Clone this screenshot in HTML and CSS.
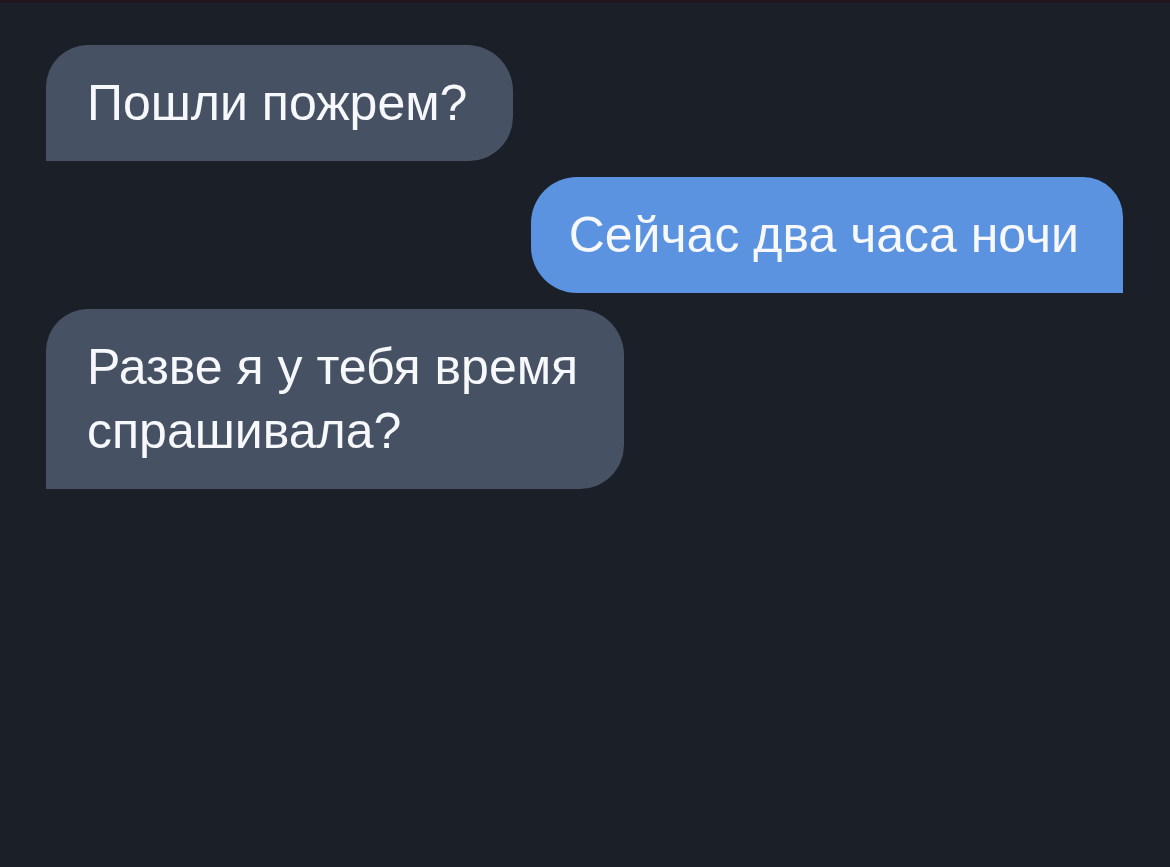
FILE: index.html
```html
<!DOCTYPE html>
<html lang="ru">
<head>
	<meta charset="utf-8" />
	<title>Чат</title>
	<link rel="stylesheet" href="styles.css">
</head>
<body>
<div class="polosa"></div>
<div class="chat">
	<div class="msg in">Пошли пожрем?</div>
	<div class="msg out">Сейчас два часа ночи</div>
	<div class="msg in">Разве я у тебя время<br />спрашивала?</div>
</div>
</body>
</html>
```

FILE: styles.css
```css
html, body {
	margin: 0;
	padding: 0;
}
body {
	background-color: #1a1f28;
	font-family: "Liberation Sans", Arial, sans-serif;
	height: 867px;
	overflow: hidden;
}
.polosa {
	height: 3px;
	background-color: #20151f;
}
.chat {
	display: flex;
	flex-direction: column;
	align-items: flex-start;
	gap: 16px;
	padding: 42px 47px 0 46px;
}
.msg {
	color: #f6f8fb;
	font-size: 50px;
	line-height: 64px;
	padding: 26px 46px 26px 41px;
	white-space: nowrap;
}
.in {
	background-color: #465264;
	border-radius: 42px 46px 44px 0;
}
.out {
	align-self: flex-end;
	background-color: #5b93e0;
	border-radius: 46px 40px 0 46px;
	padding-left: 38px;
	padding-right: 44px;
}
```
